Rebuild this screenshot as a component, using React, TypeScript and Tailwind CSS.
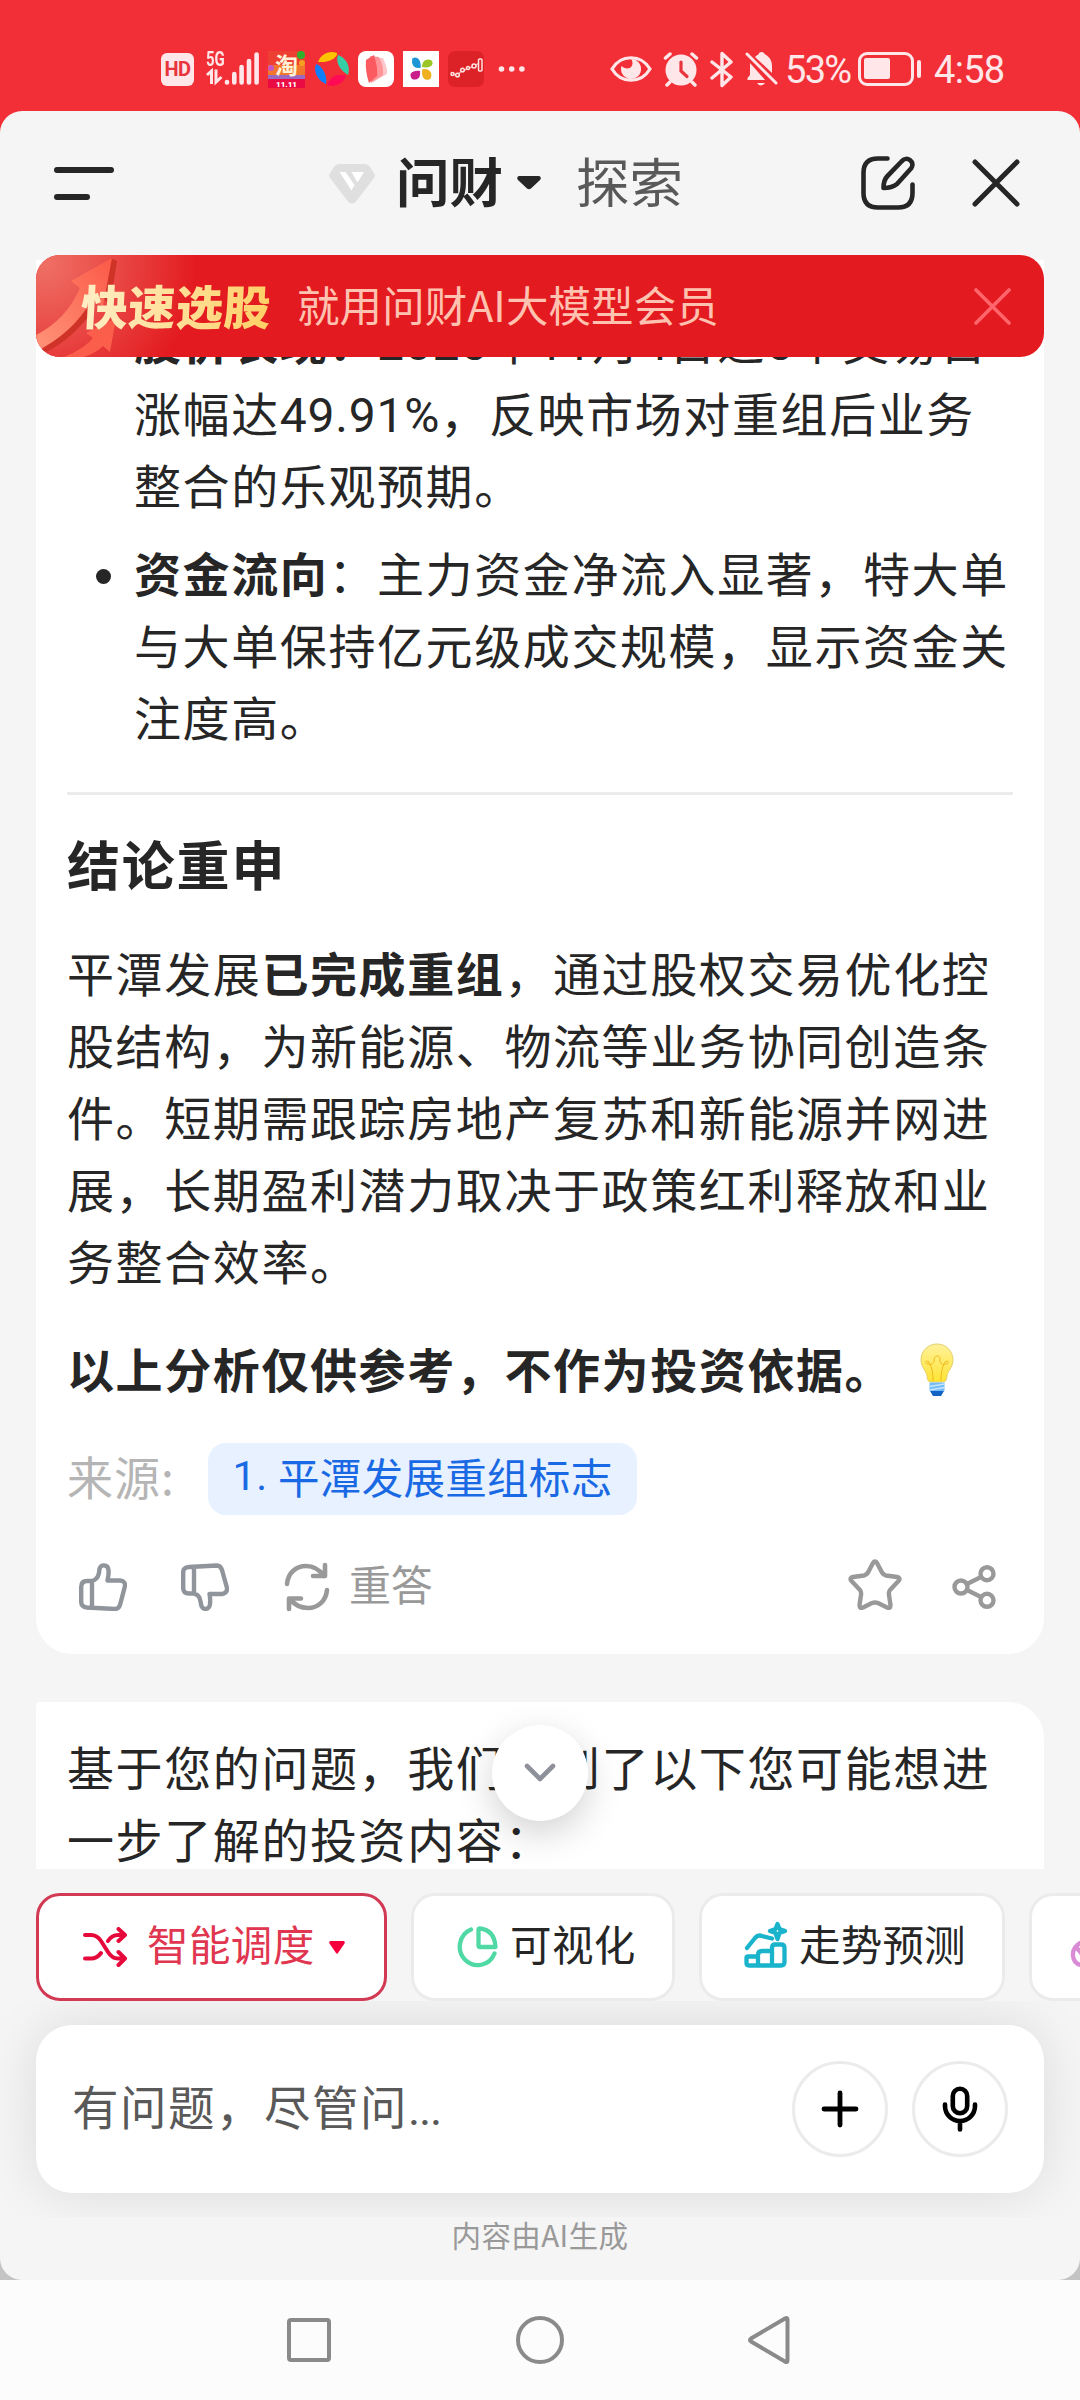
import React from "react";

const FONT = "font-['Noto_Sans_CJK_SC',sans-serif]";

function StatusBar() {
  return (
    <div className="flex h-[111px] shrink-0 items-center bg-[#f22f37] pt-[27px] text-[#ffe6e8]">
      <div className="ml-[161px] flex h-[37px] flex-1 items-center">
        <div className="flex h-[33px] w-[33px] items-center justify-center rounded-[6px] bg-[#ffe6e8] font-[Roboto] text-[20px] leading-none font-bold tracking-[-0.5px] text-[#e8353d]">
          HD
        </div>
        <div className="ml-[12px] flex h-[36px] w-[19px] flex-col">
          <span className="block origin-left scale-x-75 font-[Roboto] text-[20px] leading-[17px] font-bold">5G</span>
          <svg width="18" height="18" viewBox="0 0 18 18" fill="none" stroke="currentColor" strokeWidth="3">
            <path d="M1 7 5.500 3V16M10 1.500V14L15.500 9" />
          </svg>
        </div>
        <svg className="-ml-[1px]" width="36" height="36" viewBox="0 0 36 36" fill="none" stroke="currentColor" strokeWidth="4.600" strokeLinecap="round">
          <path d="M3 31.500V31M10.300 31.500V23M17.600 31.500V16M25 31.500V10M32.600 31.500V3.500" />
        </svg>
        <svg className="ml-[8px] overflow-visible" width="37" height="37" viewBox="0 0 37 37">
          <rect width="37" height="37" fill="#ee3f33" />
          <rect y="14" width="37" height="13" fill="#f2762c" />
          <rect y="24" width="37" height="4" fill="#9a6ac0" />
          <rect y="28" width="37" height="9" fill="#ea0b45" />
          <circle cx="33" cy="4" r="4" fill="#2fb12d" />
          <circle cx="3" cy="17" r="3" fill="#c855c8" />
          <circle cx="34" cy="12" r="3" fill="#f7a022" />
          <text x="18.500" y="23" textAnchor="middle" fontSize="23" fontWeight="700" fill="#fff2d8" fontFamily="Noto Sans CJK SC">淘</text>
          <text x="18.500" y="35.500" textAnchor="middle" fontSize="8" fontWeight="900" fill="#fff" fontFamily="Roboto">11.11</text>
        </svg>
        <svg className="ml-[9px]" width="36" height="36" viewBox="0 0 36 36">
          <path d="M4 11C7 3 15-1 23 2 24 6 16 12 4 11Z" fill="#ffc400" />
          <path d="M24 4C32 7 37 15 34 24 27 20 21 12 24 4Z" fill="#35cfa6" />
          <path d="M32 25C29 33 20 37 13 34 15 27 23 21 32 25Z" fill="#ff0a55" />
          <path d="M2 13C7 14 14 24 12 33 4 30-1 21 2 13Z" fill="#0e80ff" />
        </svg>
        <svg className="ml-[8px]" width="36" height="36" viewBox="0 0 36 36">
          <rect width="36" height="36" rx="8" fill="#fff" />
          <path d="M14 7 25 7Q30 18 29 23L15 31Z" fill="#ffc5c9" />
          <path d="M12 5 21 6Q26 16 25 24L13 32Z" fill="#ff9499" />
          <path d="M8 9 16 4Q20 17 19 25L11 32Q7 20 8 9Z" fill="#fb5a60" />
        </svg>
        <svg className="ml-[9px]" width="36" height="36" viewBox="0 0 36 36">
          <rect width="36" height="36" fill="#fff" />
          <path d="M10 8c4-2 7 1 7 8-6 1-8-3-7-8Z" fill="#1c96d4" stroke="#1c96d4" strokeWidth="1.500" />
          <path d="M19 16c0-6 4-9 9-7 4 4 0 9-9 7Z" fill="#9bc625" />
          <path d="M17 20c1 7-3 10-8 8-4-5 0-9 8-8Z" fill="#c91e8a" />
          <path d="M20 19c6-1 9 3 7 8-5 3-8-1-7-8Z" fill="#efb11f" stroke="#efb11f" strokeWidth="1.500" />
        </svg>
        <svg className="ml-[9px]" width="36" height="36" viewBox="0 0 36 36">
          <rect width="36" height="36" rx="7" fill="#dd2227" />
          <path d="M3 23 9 24 14 20 21 17 27 15 32 11" fill="none" stroke="#f4a3a3" strokeWidth="1.500" />
          <g fill="#dd2227" stroke="#ffe4e4" strokeWidth="1.500">
            <circle cx="4.500" cy="23" r="1.500" /><circle cx="9.500" cy="24" r="1.800" /><circle cx="14.500" cy="19" r="1.800" />
            <circle cx="20" cy="17" r="1.500" /><circle cx="26" cy="15" r="2" /><rect x="30.500" y="8" width="3.500" height="12" rx="1" />
          </g>
        </svg>
        <svg className="ml-[14px]" width="28" height="8" viewBox="0 0 28 8" fill="currentColor">
          <circle cx="3.500" cy="4" r="2.800" /><circle cx="13.700" cy="4" r="2.800" /><circle cx="23.900" cy="4" r="2.800" />
        </svg>
      </div>
      <div className="mr-[74px] flex h-[37px] items-center">
        <svg width="42" height="28" viewBox="0 0 42 28" fill="none">
          <path d="M2 14C11-1 31-1 40 14 31 29 11 29 2 14Z" stroke="currentColor" strokeWidth="3.200" />
          <path d="M21 4a10 10 0 1 1-9.500 7 7 5 0 0 0 8.500 2A6 6 0 0 0 21 4Z" fill="currentColor" />
        </svg>
        <svg className="ml-[11px]" width="36" height="36" viewBox="0 0 36 36" fill="none" stroke="currentColor" strokeLinecap="round">
          <circle cx="18" cy="19" r="15.500" fill="currentColor" stroke="none" />
          <path d="M2.500 7 7 3M33.500 7 29 3M7 31 4 34M29 31l3 3" strokeWidth="3.500" />
          <path d="M18 11v9l6 5.500" stroke="#e8353d" strokeWidth="3.200" />
        </svg>
        <svg className="ml-[11px]" width="24" height="37" viewBox="0 0 24 37" fill="none" stroke="currentColor" strokeWidth="3.400" strokeLinejoin="round" strokeLinecap="round">
          <path d="M2 11 21 26 12 34.500V2.500L21 11 2 27" />
        </svg>
        <svg className="ml-[11px]" width="33" height="36" viewBox="0 0 33 36" fill="currentColor">
          <path d="M11 5C13 3 14 4 14 2Q16.500 0 19 2C19 4 27 5 27 15V22L10 6ZM5 12 20 29H2.500V27L5 24Z" />
          <path d="M12 32h8q-4 5-8 0Z" />
          <path d="M2 3 31 32" stroke="currentColor" strokeWidth="3" strokeLinecap="round" />
        </svg>
        <span className="mt-[2px] ml-[7px] block w-[68px] font-[Roboto] text-[38px] leading-[37px] tracking-[-1.700px] whitespace-nowrap">53%</span>
        <svg className="ml-[5px]" width="64" height="34" viewBox="0 0 64 34" fill="none">
          <rect x="1.500" y="1.500" width="53" height="31" rx="7.500" stroke="currentColor" strokeWidth="3" />
          <rect x="6" y="6" width="26" height="21" rx="2" fill="currentColor" />
          <path d="M61 10v14" stroke="currentColor" strokeWidth="4" strokeLinecap="round" />
        </svg>
        <span className="mt-[2px] ml-[12px] block w-[72px] font-[Roboto] text-[38px] leading-[37px] tracking-[-0.700px] whitespace-nowrap">4:58</span>
      </div>
    </div>
  );
}

function Header() {
  return (
    <header className="flex h-[144px] shrink-0 items-center text-[#262626]">
      <div className="ml-[54px] flex w-[60px] flex-col gap-[21px]">
        <span className="block h-[6px] w-[60px] rounded-full bg-[#262626]" />
        <span className="block h-[6px] w-[36px] rounded-full bg-[#262626]" />
      </div>
      <svg className="mt-[2px] ml-[214px]" width="48" height="40" viewBox="0 0 48 40">
        <path d="M11 0H37Q40 0 42 3L46.500 10Q47.500 12 46 14L28 37.500Q24 42 20 37.500L2 14Q.5 12 1.500 10L6 3Q8 0 11 0Z" fill="#dfdfdf" />
        <path d="M11.500 8H17.500L26.500 21 23.500 26.500ZM23.500 8H36L29.500 18.500Z" fill="#fff" />
      </svg>
      <span className="mt-[-7px] ml-[20px] block w-[108px] text-[53.500px] leading-[72px] font-bold whitespace-nowrap">问财</span>
      <svg className="mt-[-1px] ml-[13px]" width="24" height="14" viewBox="0 0 24 14" fill="#262626">
        <path d="M2 0H22Q25 1 23 4L14 12.500Q12 14 10 12.500L1 4Q-1 1 2 0Z" />
      </svg>
      <span className="mt-[-7px] ml-[35px] block w-[107px] text-[53.500px] leading-[72px] whitespace-nowrap text-[#595959]">探索</span>
      <svg className="ml-[178px]" width="54" height="54" viewBox="0 0 54 54" fill="none" stroke="#262626" strokeWidth="4.600" strokeLinecap="round" strokeLinejoin="round">
        <path d="M26.500 2.500H17Q2.500 2.500 2.500 17V37Q2.500 51.500 17 51.500H37Q51.500 51.500 51.500 37V28.500" />
        <path d="M40.500 5.500C45.500-1 55 6 50 12.500L36 28Q31 32 22.500 32 22.500 24 26.500 20Z" />
      </svg>
      <svg className="ml-[57px]" width="48" height="48" viewBox="0 0 48 48" fill="none" stroke="#262626" strokeWidth="5" strokeLinecap="round">
        <path d="M3 3 45 45M45 3 3 45" />
      </svg>
    </header>
  );
}

function Banner() {
  return (
    <div className="absolute top-0 left-[36px] flex h-[102px] w-[1008px] items-center overflow-hidden rounded-[24px] bg-[#e31b20]">
      <svg className="absolute top-0 left-0" width="170" height="102" viewBox="0 0 170 102">
        <defs>
          <radialGradient id="glow" gradientUnits="userSpaceOnUse" cx="10" cy="10" r="150">
            <stop offset="0" stopColor="#ef6f64" />
            <stop offset="0.450" stopColor="#e94a47" />
            <stop offset="1" stopColor="#e31b20" />
          </radialGradient>
          <linearGradient id="arrow" x1="0" y1="1" x2="1" y2="0">
            <stop offset="0" stopColor="#ff9478" />
            <stop offset="1" stopColor="#fb5a48" />
          </linearGradient>
        </defs>
        <rect width="170" height="102" fill="url(#glow)" />
        <path d="M75 3 81 6 74 50 68 44ZM5 95Q35 75 53 50L57 56Q35 85 10 97Z" fill="#cf3227" />
        <path d="M76 3 35 26 44 33Q30 65 0 80V96Q35 80 56 45L67 51Z" fill="url(#arrow)" />
        <path d="M80 63 74 97 67 91Q60 98 48 102H28Q48 94 57 83L50 78Z" fill="#fb5f4b" />
      </svg>
      <span className="relative mt-[-3px] ml-[45px] block w-[192px] -skew-x-3 bg-gradient-to-r from-[#ffeec6] to-[#ffcf62] bg-clip-text text-[47px] leading-[70px] font-black tracking-[0.600px] whitespace-nowrap text-transparent">快速选股</span>
      <span className="relative mt-[-4px] ml-[24px] block text-[42.500px] leading-[60px] font-normal tracking-[0.100px] whitespace-nowrap text-[#ffc2b0]">就用问财AI大模型会员</span>
      <svg className="mr-[33px] ml-auto" width="37" height="37" viewBox="0 0 37 37" fill="none" stroke="#ff666c" strokeWidth="3.600" strokeLinecap="round">
        <path d="M2 2 35 35M35 2 2 35" />
      </svg>
    </div>
  );
}

function Num({ children }: { children: React.ReactNode }) {
  return <span className="font-[Roboto] text-[48px] leading-none tracking-[0.800px]">{children}</span>;
}

function ScrollArea() {
  return (
    <main className="relative h-[1614px] shrink-0 overflow-hidden px-[36px] text-[47px] leading-[72px] tracking-[1.600px] whitespace-nowrap text-[#262626]">
      <section className="mt-[5px] h-[1394px] rounded-b-[36px] bg-white px-[31px] pt-[44px]">
        <ul className="pl-[67px]">
          <li>
            <div className="h-[72px]"><b>股价表现：</b><Num>2025</Num>年<Num>11</Num>月<Num>4</Num>日近<Num>5</Num>个交易日</div>
            <div className="h-[72px]">涨幅达<Num>49.91%</Num>，反映市场对重组后业务</div>
            <div>整合的乐观预期。</div>
          </li>
          <li className="relative mt-[16px]">
            <span className="absolute top-[33px] left-[-38px] h-[15px] w-[15px] rounded-full bg-[#262626]" />
            <div><b>资金流向</b>：主力资金净流入显著，特大单</div>
            <div>与大单保持亿元级成交规模，显示资金关</div>
            <div>注度高。</div>
          </li>
        </ul>
        <hr className="mt-[40px] h-[3px] border-0 bg-[#ebebeb]" />
        <h2 className="mt-[32px] text-[53px] font-bold tracking-[1.800px]">结论重申</h2>
        <div className="mt-[37px]">
          <div>平潭发展<b>已完成重组</b>，通过股权交易优化控</div>
          <div>股结构，为新能源、物流等业务协同创造条</div>
          <div>件。短期需跟踪房地产复苏和新能源并网进</div>
          <div>展，长期盈利潜力取决于政策红利释放和业</div>
          <div>务整合效率。</div>
        </div>
        <div className="mt-[36px] flex h-[72px] items-center font-bold">
          <span>以上分析仅供参考，不作为投资依据。</span>
          <svg className="mt-[3px] ml-[27px]" width="34" height="54" viewBox="0 0 34 54">
            <defs>
              <linearGradient id="bulb" x1="0" y1="0" x2="0" y2="1">
                <stop offset="0" stopColor="#fff19a" />
                <stop offset="1" stopColor="#ffe433" />
              </linearGradient>
            </defs>
            <path d="M17 1C8 1 1 8 1 17 1 25 7 27 7.500 36Q8 39 11 39H23Q26 39 26.500 36C27 27 33 25 33 17 33 8 26 1 17 1Z" fill="url(#bulb)" stroke="#e3cf6c" strokeWidth="1" />
            <path d="M13 38Q13 27 10 21C4 22 5 16 9 19 10 24 15 20 14 16 15 12 20 12 20 16 19 20 24 24 25 19 29 16 30 22 24 21Q21 27 21 38" fill="none" stroke="#f0b91e" strokeWidth="1" />
            <path d="M9.500 39.500H24.500V48H9.500Z" fill="#74bcf7" />
            <path d="M9.500 43.500 24.500 41M9.500 47 24.500 44.500" stroke="#c4e4ff" strokeWidth="1.500" />
            <path d="M10 48H24L21 53H13Z" fill="#1263c4" />
          </svg>
        </div>
        <div className="mt-[39px] flex h-[72px] items-center">
          <span className="mt-[-8px] w-[141px] text-[46px] tracking-[1px] text-[#b5b5b5]">来源:</span>
          <span className="flex h-[72px] w-[429px] items-center justify-center rounded-[18px] bg-[#e7f1ff] pb-[6px] text-[41.500px] tracking-[0.300px] whitespace-pre text-[#1a69e4]"><span className="font-[Roboto]">1. </span>平潭发展重组标志</span>
        </div>
        <div className="mt-[24px] flex h-[96px] items-center text-[#999999]">
          <svg className="ml-[12px]" width="48" height="48" viewBox="0 0 48 48" fill="none" stroke="#8f959b" strokeWidth="4.400" strokeLinejoin="round" strokeLinecap="round">
            <path d="M13 18C19 16 20 12 20.500 6 21 1 29 1 29.500 7 30 12 29 14 28.500 17.500H41Q46.500 18 46 23L41 42Q39.500 46 36 46L8 44.500Q2.200 44 2.200 39V24Q2.200 18 8 18ZM13 18V44" />
          </svg>
          <svg className="ml-[54px]" width="48" height="48" viewBox="0 0 48 48" fill="none" stroke="#8f959b" strokeWidth="4.400" strokeLinejoin="round" strokeLinecap="round">
            <path d="M13 30.500C19 32 19 36 20 41 20.500 47.500 28.500 47.500 29 41 29.500 36 29 34 28.500 31H41Q46.500 30 46 25L41 7Q39.500 2.500 36 2.500L8 4Q2.200 4.500 2.200 9V25Q2.200 30.500 8 30.500ZM13 30.500V4" />
          </svg>
          <svg className="ml-[55px]" width="46" height="50" viewBox="0 0 46 50" fill="none" stroke="#999" strokeWidth="4.600" strokeLinecap="round" strokeLinejoin="round">
            <path d="M3 22C4 10 13 4 22 4Q33 4 40 14M41 3V14H29M43 28C42 39 34 46 24 46Q13 46 6 37M5 47V36.500H17" />
          </svg>
          <span className="mt-[-8px] ml-[19px] text-[42px] tracking-[-0.300px]">重答</span>
          <svg className="mt-[-4px] ml-auto" width="54" height="52" viewBox="0 0 54 52" fill="none" stroke="#999" strokeWidth="4.400" strokeLinejoin="round">
            <path d="M25 4Q27 1 29 4L34 13.500Q35.500 16 38 16.500L49 18Q53 19 50.500 22L42 31Q40.500 33 41 36L42.500 46Q42.500 50 39 48.500L30 44Q27 43 24 44L15 48.500Q11.500 50 11.500 46L13 36Q13.500 33 12 31L3.500 22Q1 19 5 18L16 16.500Q18.500 16 20 13.500Z" />
          </svg>
          <svg className="mr-[17px] ml-[50px]" width="44" height="44" viewBox="0 0 44 44" fill="none" stroke="#999" strokeWidth="4.400">
            <circle cx="9" cy="22" r="6.500" /><circle cx="35" cy="8.700" r="6.500" /><circle cx="35" cy="35.300" r="6.500" />
            <path d="M15 19 29 12M15 25 29 32" />
          </svg>
        </div>
      </section>
      <section className="mt-[48px] h-[260px] rounded-tl-[4px] rounded-tr-[36px] bg-white px-[31px] pt-[28px]">
        <div>基于您的问题，我们找到了以下您可能想进</div>
        <div>一步了解的投资内容：</div>
      </section>
      <Banner />
      <button className="absolute top-[1470px] left-[492px] flex h-[96px] w-[96px] items-center justify-center rounded-full bg-white shadow-[0_12px_36px_rgba(0,0,0,0.18)]">
        <svg width="32" height="20" viewBox="0 0 32 20" fill="none" stroke="#8e9199" strokeWidth="4.600" strokeLinecap="round" strokeLinejoin="round">
          <path d="M3 3 16 16 29 3" />
        </svg>
      </button>
    </main>
  );
}

function Chips() {
  return (
    <div className="flex h-[132px] shrink-0 gap-[24px] overflow-hidden pt-[24px] pl-[36px] text-[41.500px] leading-[60px] whitespace-nowrap text-[#262626]">
      <button className="flex h-[108px] w-[351px] shrink-0 items-center rounded-[24px] border-3 border-[#d23a54] bg-white text-[#e0364f]">
        <svg className="ml-[43px]" width="46" height="40" viewBox="0 0 46 40" fill="none" stroke="#e60a3c" strokeWidth="4" strokeLinecap="round" strokeLinejoin="round">
          <path d="M3 8H9Q15 8 19 14L26 25Q30 31.500 36 31.500H43M36.500 2 43 8 36.500 14M3 31.500H9Q15 31.500 19 26M26 14Q30 8 36 8H42M36.500 25 43 31.500 36.500 38" />
        </svg>
        <span className="mt-[-8px] ml-[19px] block w-[168px] text-left tracking-[0.400px]">智能调度</span>
        <svg className="ml-[14px]" width="16" height="13" viewBox="0 0 16 13" fill="#f5003d"><path d="M1.500 0H14.500Q16.500 .5 15.500 2.500L9 12Q8 13.500 7 12L.5 2.500Q-.5.5 1.500 0Z" /></svg>
      </button>
      <button className="flex h-[108px] w-[264px] shrink-0 items-center rounded-[24px] border-3 border-[#ebebeb] bg-white">
        <svg className="ml-[43px]" width="41" height="42" viewBox="0 0 41 42" fill="none" stroke="#50d9a5" strokeWidth="4.300" strokeLinecap="round" strokeLinejoin="round">
          <path d="M14 3.500A18 18.500 0 1 0 37.500 27.500M23 2.500Q37.500 4 38.500 21H23Q21.500 21 21.500 19.500V4Q21.500 2.500 23 2.500Z" />
        </svg>
        <span className="mt-[-8px] ml-[12px] tracking-[0.400px]">可视化</span>
      </button>
      <button className="flex h-[108px] w-[306px] shrink-0 items-center rounded-[24px] border-3 border-[#ebebeb] bg-white">
        <svg className="mt-[-6px] ml-[42px]" width="44" height="47" viewBox="0 0 44 47" fill="none" stroke="#19b4cb" strokeWidth="4.300" strokeLinecap="round" strokeLinejoin="round">
          <path d="M3 27 11 17Q14 13.500 18 15L28 17.500M33.500 3 35.500 8 41 10 35.500 12 33.500 18 31.500 12 26 10 31.500 8Z" />
          <path d="M14 35.500H4Q2.500 35.500 2.500 37V42Q2.500 44.500 5 44.500H37Q40.500 44.500 40.500 41V27Q40.500 23.500 37 23.500H31Q28 23.500 28 27V44M28 30H18Q14 30 14 34V44" />
        </svg>
        <span className="mt-[-8px] ml-[11px] tracking-[0.200px]">走势预测</span>
      </button>
      <button className="flex h-[108px] w-[264px] shrink-0 items-center rounded-[24px] border-3 border-[#ebebeb] bg-white">
        <svg className="ml-[38px]" width="44" height="44" viewBox="0 0 44 44" fill="none" stroke="#d98bd6" strokeWidth="4.300" strokeLinecap="round">
          <path d="M12 17Q2 22 3 31 4 40 14 40.500 25 40 25 29 25 22 12 17L30 3M6 22 18 36" />
        </svg>
      </button>
    </div>
  );
}

function Composer() {
  return (
    <>
      <div className="h-[216px] shrink-0 overflow-hidden px-[36px] pt-[24px]">
        <div className="flex h-[168px] items-center rounded-[36px] bg-white shadow-[0_0_54px_rgba(0,0,0,0.110)]">
          <span className="mt-[-4px] ml-[36px] text-[46.500px] leading-[72px] tracking-[1.500px] text-[#595959]">有问题，尽管问<span className="font-[Roboto] tracking-[-1.200px]">...</span></span>
          <button className="ml-auto flex h-[96px] w-[96px] items-center justify-center rounded-full border-3 border-[#ebebeb]">
            <svg width="38" height="38" viewBox="0 0 38 38" stroke="#000" strokeWidth="4.800" strokeLinecap="round"><path d="M19 3V35M3 19H35" /></svg>
          </button>
          <button className="mr-[36px] ml-[24px] flex h-[96px] w-[96px] items-center justify-center rounded-full border-3 border-[#ebebeb]">
            <svg width="36" height="46" viewBox="0 0 36 46" fill="none" stroke="#000" strokeWidth="4.600" strokeLinecap="round">
              <rect x="10.800" y="2.800" width="14.400" height="24.500" rx="7.200" />
              <path d="M3 18.500V20A15 15 0 0 0 33 20V18.500M18 36V43.500" />
            </svg>
          </button>
        </div>
      </div>
      <p className="h-[63px] shrink-0 text-center text-[29.500px] leading-[35px] tracking-[0.400px] text-[#999999]">内容由AI生成</p>
    </>
  );
}

function NavBar() {
  return (
    <nav className="flex h-[120px] shrink-0 items-center bg-[#fcfcfc]">
      <span className="ml-[287px] block h-[44px] w-[44px] rounded-[4px] border-4 border-[#8a8a8a]" />
      <span className="ml-[185px] block h-[48px] w-[48px] rounded-full border-4 border-[#8a8a8a]" />
      <svg className="ml-[183px]" width="43" height="50" viewBox="0 0 43 50" fill="none" stroke="#8a8a8a" strokeWidth="4" strokeLinejoin="round">
        <path d="M38 3.500Q40.500 2 40.500 4.500V45.500Q40.500 48 38 46.500L4 26.500Q2 25 4 23.500Z" />
      </svg>
    </nav>
  );
}

export default function App() {
  return (
    <div className={`flex h-[2400px] w-[1080px] flex-col overflow-hidden ${FONT}`}>
      <StatusBar />
      <div className="h-[2169px] shrink-0 bg-gradient-to-b from-[#f22f37] from-50% to-[#c4c4c4] to-50%">
        <div className="flex h-[2169px] flex-col rounded-[22px] bg-[#f5f5f5]">
          <Header />
          <ScrollArea />
          <Chips />
          <Composer />
        </div>
      </div>
      <NavBar />
    </div>
  );
}
